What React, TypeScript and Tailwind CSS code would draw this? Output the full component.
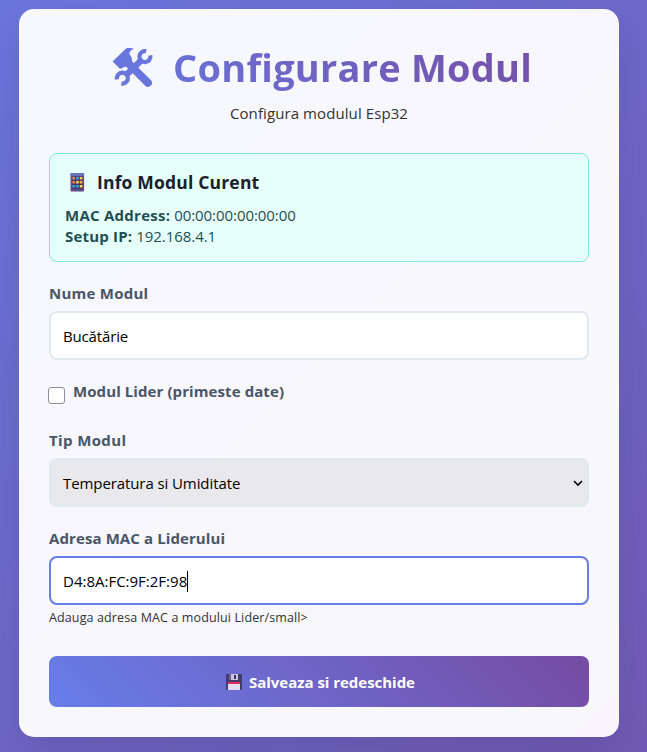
function ToolsIcon() {
  return (
    <svg className="mt-[2px] block h-[42px] w-[42px] shrink-0" viewBox="0 0 42 42" aria-hidden="true">
      <g fill="#6976dd">
        <path d="M.6 14.6 L14 1.5 C16 .8 20 1 22 2 C19 3 17.3 4.6 17.4 6.6 C17.5 8.4 19.6 9.4 19.8 11.4 L20.4 15.6 L16.5 20.5 C14.6 19.4 12.6 19.4 11 20.4 C9.8 21.3 8.7 21.8 7.6 21.6 Z" />
      </g>
      <g fill="none" stroke="#6976dd">
        <path d="M17.5 17.5 L36 35.8" strokeWidth="8" strokeLinecap="round" />
        <path d="M28.5 14 L15 27.3" strokeWidth="6.4" />
        <path d="M34.2 4.2 A5.5 5.5 0 1 0 38.3 8.4" strokeWidth="4.2" />
        <path d="M5 32.4 A5.5 5.5 0 1 1 9.4 36.6" strokeWidth="4.2" />
      </g>
    </svg>
  );
}

const keys = ["#f28244", "#2da4ed", "#ffc844", "#ef8447", "#ffd14b", "#ffb240", "#39a9e8", "#35a5e8", "#ffd34b"];

function ModuleIcon() {
  return (
    <svg className="h-5 w-4 shrink-0" viewBox="0 0 16 20" aria-hidden="true">
      <rect x="1.5" y="1" width="13.6" height="18.5" rx="1" fill="#654b8c" />
      <path d="M2.5 1h11.6q1 0 1 1v2.4H1.5V2q0-1 1-1Z" fill="#6573bb" />
      <rect x="3" y="4.4" width="10.8" height="12.8" fill="#493c68" />
      {keys.map((color, i) => (
        <rect key={i} x={3.4 + (i % 3) * 3.7} y={5 + Math.floor(i / 3) * 4} width="2.6" height="2.6" rx=".4" fill={color} />
      ))}
    </svg>
  );
}

function FloppyIcon() {
  return (
    <svg className="h-[18px] w-[18px] shrink-0" viewBox="0 0 18 18" aria-hidden="true">
      <path d="M2 1h14q1 0 1 1v14q0 1-1 1H2l-1-1V2q0-1 1-1Z" fill="#433b6b" />
      <path d="M4 1h9v6H4Z" fill="#c8c6dc" />
      <path d="M4 1h2v6H4Z" fill="#6b6690" />
      <path d="M9 2h2v4H9Z" fill="#39315e" />
      <path d="M3 9h12v8H3Z" fill="#e5def0" />
      <path d="M3 9h12v2H3Z" fill="#e52f55" />
    </svg>
  );
}

export default function App() {
  return (
    <div className="h-[752px] w-[647px] overflow-hidden bg-[linear-gradient(135deg,#6a75dc_0%,#705ab5_100%)] pt-[9px] pl-[19px] font-['Open_Sans','Noto_Sans',sans-serif] text-[15px] leading-[21px] text-[#333]">
      <main className="flex h-[728px] w-[600px] flex-col rounded-[15px] bg-white/95 px-[30px] pt-[30px] shadow-[0_20px_40px_rgba(0,0,0,0.1)]">
        <h1 className="flex h-[56px] items-center pl-[63px]">
          <ToolsIcon />
          <span className="ml-[19px] bg-[linear-gradient(45deg,#6a72d8,#754fa7)] bg-clip-text text-[38px] leading-[56px] font-bold tracking-[0.22px] whitespace-nowrap text-transparent">Configurare Modul</span>
        </h1>
        <p className="mt-[8px] text-center tracking-[0.09px]">Configura modulul Esp32</p>

        <section className="mt-[29px] h-[109px] rounded-lg border border-[#81e6d9] bg-[#e6fffa] px-[15px] pt-[15px] text-[#234e52]">
          <h2 className="flex h-[26px] items-center gap-[12px] pl-[4px] text-[17.5px] font-bold tracking-[0.18px] text-[#1a202c]">
            <ModuleIcon />
            <span>Info Modul Curent</span>
          </h2>
          <p className="mt-[10px]"><strong className="tracking-[0.26px]">MAC Address:</strong> <span className="tracking-[-0.06px]">00:00:00:00:00:00</span></p>
          <p><strong className="tracking-[0.2px]">Setup IP:</strong> <span className="tracking-[-0.06px]">192.168.4.1</span></p>
        </section>

        <form className="flex flex-col" onSubmit={(e) => e.preventDefault()}>
          <label htmlFor="name" className="mt-[21px] font-bold tracking-[0.25px] text-[#4a5568]">Nume Modul</label>
          <input id="name" defaultValue="Bucătărie" className="mt-[7px] h-[49px] rounded-lg border-2 border-[#e2e8f0] bg-white px-3 tracking-[-0.15px] text-black outline-none" />

          <label className="mt-[21px] flex h-[21px] gap-[8px] font-bold text-[#4a5568]">
            <input type="checkbox" className="mt-[6px] -ml-px h-[17px] w-[17px] appearance-none rounded-[3px] border border-[#8f8f9d] bg-white" />
            <span className="tracking-[0.09px]">Modul Lider (primeste date)</span>
          </label>

          <span className="mt-[28px] font-bold tracking-[0.38px] text-[#4a5568]">Tip Modul</span>
          <div className="mt-[7px] flex h-[49px] items-center justify-between rounded-lg border-2 border-[#e2e8f0] bg-[#e9e9ed] pt-px pr-[4px] pl-3 text-black">
            <span className="tracking-[-0.09px]">Temperatura si Umiditate</span>
            <svg className="h-[10px] w-[10px]" viewBox="0 0 10 10" fill="none" stroke="#000" strokeWidth="1.6"><path d="m1 3 4 4 4-4" /></svg>
          </div>

          <span className="mt-[21px] font-bold tracking-[0.1px] text-[#4a5568]">Adresa MAC a Liderului</span>
          <div className="mt-[7px] flex h-[49px] items-center rounded-lg border-2 border-[#667eea] bg-white px-3 pt-px text-black">
            <span>D4:8A:FC:9F:2F:98</span>
            <span className="h-[21px] w-px bg-black" />
          </div>
          <small className="mt-[4px] text-[12.5px] leading-[18px] tracking-[0.12px]">Adauga adresa MAC a modului Lider/small&gt;</small>

          <button className="mt-[29px] flex h-[51px] items-center justify-center gap-[6px] rounded-lg bg-[linear-gradient(45deg,#667eea,#764ba2)] pt-px pl-[2px] font-bold text-white">
            <FloppyIcon />
            <span className="tracking-[-0.03px]">Salveaza si redeschide</span>
          </button>
        </form>
      </main>
    </div>
  );
}
